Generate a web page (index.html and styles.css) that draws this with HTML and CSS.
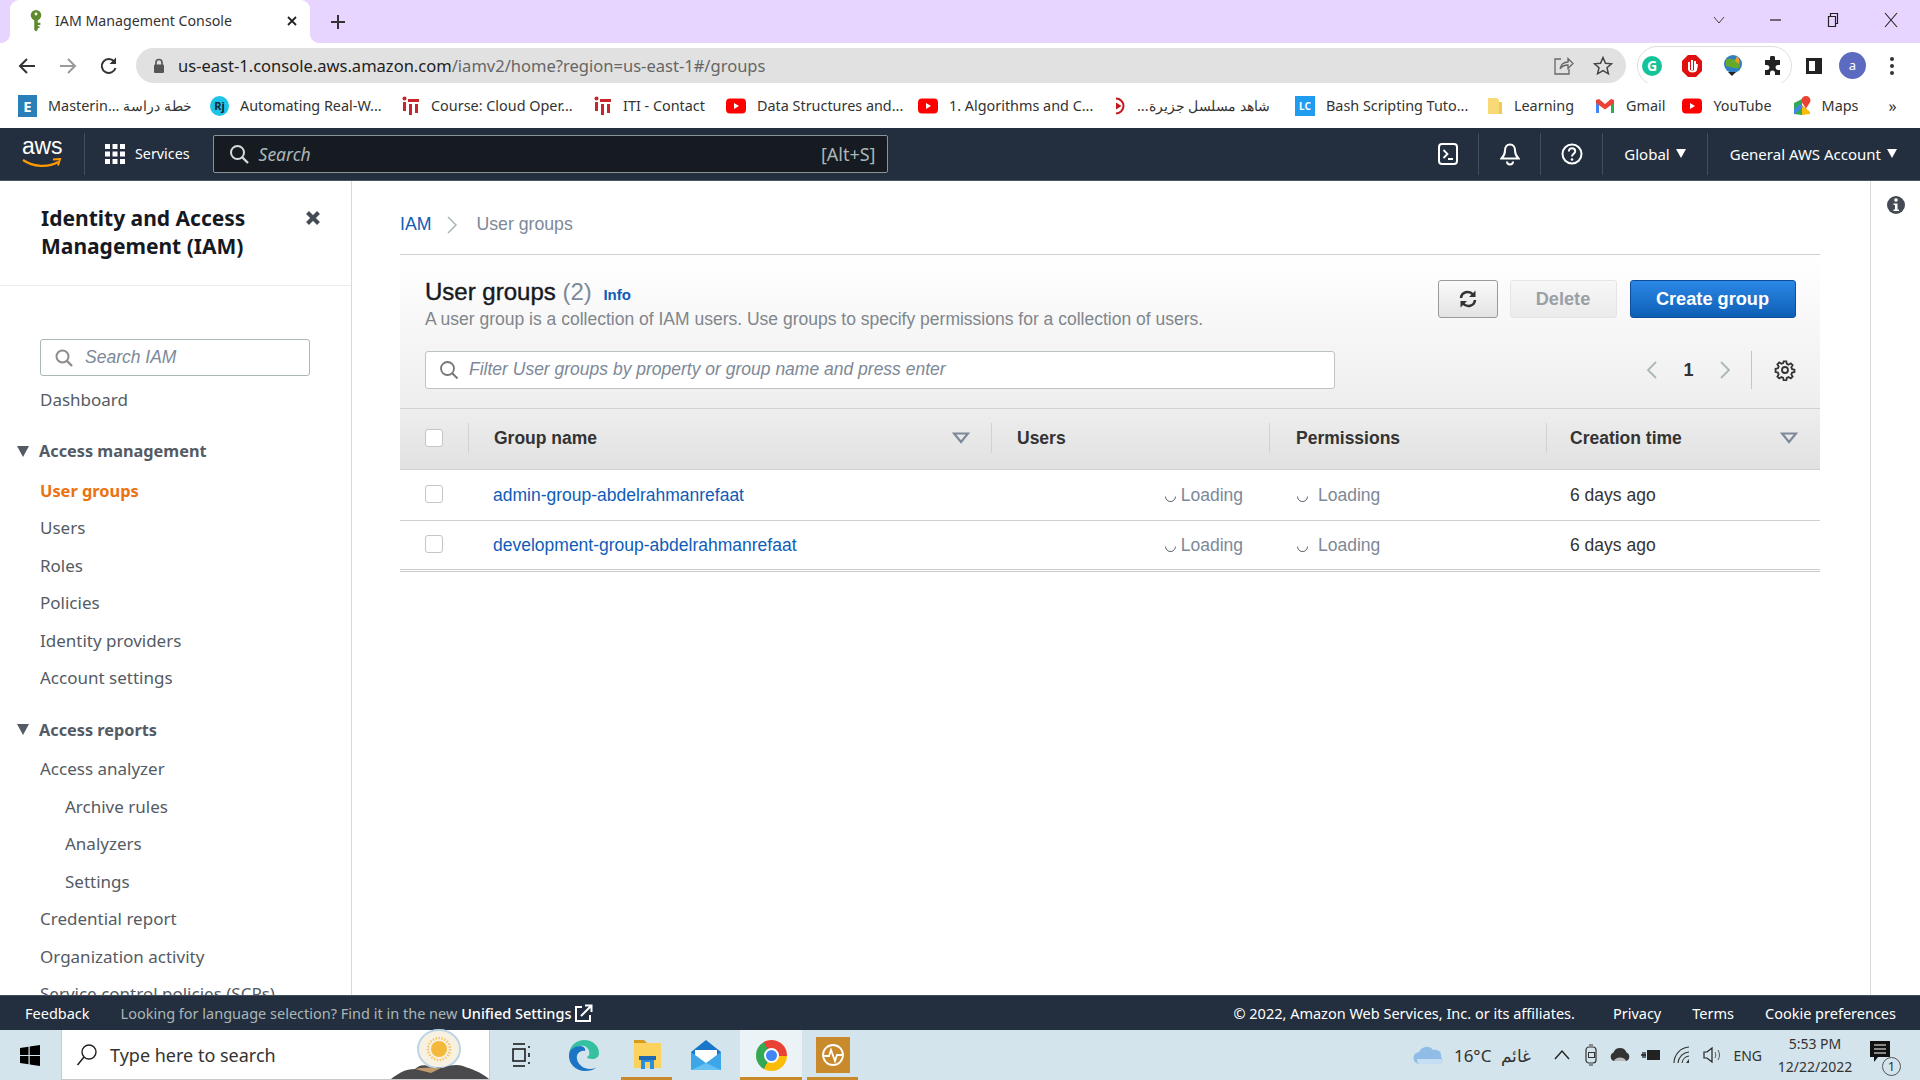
FILE: index.html
```html
<!DOCTYPE html>
<html lang="en">

<head>
  <meta charset="UTF-8">
  <meta name="viewport" content="width=device-width, initial-scale=1.0">
  <title>IAM Management Console</title>
  <link rel="stylesheet" href="styles.css">
</head>

<body>
  <!-- browser window -->
  <div class="tabstrip">
    <div class="tab">
      <svg class="favicon" width="16" height="26" viewBox="0 0 16 26"><circle cx="8" cy="6.5" r="6" fill="#5f8a2c"/><circle cx="8" cy="5" r="1.6" fill="#fff"/><path d="M6 11h4v12l-2 2-2-2zM10 15h3v2.5h-3zM10 19h2v2h-2z" fill="#5f8a2c"/></svg>
      <span class="tab-title">IAM Management Console</span>
      <svg class="tab-close" width="12" height="12" viewBox="0 0 12 12"><path d="M2 2l8 8M10 2l-8 8" stroke="#222" stroke-width="1.8"/></svg>
    </div>
    <svg class="new-tab" width="16" height="16" viewBox="0 0 16 16"><path d="M8 1v14M1 8h14" stroke="#333" stroke-width="2"/></svg>
    <div class="window-btns">
      <svg width="14" height="10" viewBox="0 0 14 10"><path d="M2 2l5 6 5-6" fill="none" stroke="#444"/></svg>
      <svg width="14" height="10" viewBox="0 0 14 10"><path d="M1 5h11" stroke="#222" stroke-width="1.2"/></svg>
      <svg width="14" height="16" viewBox="0 0 14 16"><path d="M2.500 4.500h7v10h-7zM4.500 4V1.500h7v10H10" fill="none" stroke="#222" stroke-width="1.200"/></svg>
      <svg width="16" height="16" viewBox="0 0 16 16"><path d="M2 1l12 14M14 1L2 15" stroke="#222" stroke-width="1.100"/></svg>
    </div>
  </div>

  <div class="toolbar">
    <svg class="tool-btn" width="20" height="20" viewBox="0 0 20 20"><path d="M18 10H3M10 3l-7 7 7 7" fill="none" stroke="#333" stroke-width="2"/></svg>
    <svg class="tool-btn" width="20" height="20" viewBox="0 0 20 20"><path d="M2 10h15M10 3l7 7-7 7" fill="none" stroke="#9a9a9a" stroke-width="2"/></svg>
    <svg class="tool-btn" width="20" height="20" viewBox="0 0 20 20"><path d="M16.500 12a7 7 0 1 1-1.300-6.500" fill="none" stroke="#333" stroke-width="2"/><path d="M17 1.500V8h-6.500z" fill="#333"/></svg>
    <div class="omnibox">
      <svg width="12" height="16" viewBox="0 0 12 16"><path d="M3 7V4.500a3 3 0 0 1 6 0V7" fill="none" stroke="#555" stroke-width="1.600"/><rect x="1" y="6.500" width="10" height="8.500" rx="1.200" fill="#555"/></svg>
      <span class="url"><span class="url-host">us-east-1.console.aws.amazon.com</span>/iamv2/home?region=us-east-1#/groups</span>
      <svg class="omni-share" width="22" height="22" viewBox="0 0 22 22"><path d="M9 4H3v15h14v-5" fill="none" stroke="#666" stroke-width="1.300"/><path d="M8 14c1-5 4-7 8-7V3.500L21 8.500l-5 5V10c-3 0-6 1-8 4z" fill="none" stroke="#666" stroke-width="1.300"/></svg>
      <svg width="20" height="20" viewBox="0 0 20 20"><path d="M10 1.500l2.500 5.700 6.100.6-4.600 4 1.400 6-5.400-3.200-5.400 3.200 1.400-6-4.600-4 6.100-.6z" fill="none" stroke="#444" stroke-width="1.500"/></svg>
    </div>
    <div class="ext-pill">
      <span class="ext-g">G</span>
      <svg width="22" height="24" viewBox="0 0 22 24"><path d="M7 1h8l6 6v10l-6 6H7l-6-6V7z" fill="#e01010"/><path d="M8 16V8M11 16V6M14 16V7M8 16c1 2 6 2 7 0l1-6" fill="none" stroke="#fff" stroke-width="2"/></svg>
      <svg width="22" height="24" viewBox="0 0 22 24"><circle cx="11" cy="10" r="9" fill="#2f7fc4"/><path d="M4 6c4-3 8 1 10-1 3 2 5 6 3 9-4 1-7-1-13-2z" fill="#65a92a"/><path d="M15 2c2 2 3 5 2 8l-4-3z" fill="#f0a020"/><path d="M6 18l4 4 4-4z" fill="#222"/></svg>
      <svg width="20" height="20" viewBox="0 0 20 20"><path d="M7 2a2.500 2.500 0 0 1 5 0v2h5v5h-2a2.500 2.500 0 0 0 0 5h2v5h-5v-2a2.500 2.500 0 0 0-5 0v2H2v-5h2a2.500 2.500 0 0 0 0-5H2V4h5z" fill="#222"/></svg>
    </div>
    <svg class="side-panel" width="18" height="18" viewBox="0 0 18 18"><path d="M1 1h16v16H1z" fill="#222"/><path d="M4 4h6v10H4z" fill="#fff"/></svg>
    <span class="avatar">a</span>
    <svg class="tool-menu" width="6" height="20" viewBox="0 0 6 20"><circle cx="3" cy="3" r="2" fill="#333"/><circle cx="3" cy="10" r="2" fill="#333"/><circle cx="3" cy="17" r="2" fill="#333"/></svg>
  </div>

  <div class="bookmarks">
    <div class="bookmark long">
      <span class="bm-e">E</span>
      <span>Masterin... خطة دراسة</span>
    </div>
    <div class="bookmark long">
      <span class="bm-rj">Rj</span>
      <span>Automating Real-W...</span>
    </div>
    <div class="bookmark long">
      <svg width="18" height="20" viewBox="0 0 18 20"><path d="M1 6h3v9H1zM6 3h11v3H6zM7 8h3v11H7zM13 8h3v9h-3z" fill="#c9252d"/><circle cx="2.500" cy="2.500" r="2" fill="#c9252d"/></svg>
      <span>Course: Cloud Oper...</span>
    </div>
    <div class="bookmark">
      <svg width="18" height="20" viewBox="0 0 18 20"><path d="M1 6h3v9H1zM6 3h11v3H6zM7 8h3v11H7zM13 8h3v9h-3z" fill="#c9252d"/><circle cx="2.500" cy="2.500" r="2" fill="#c9252d"/></svg>
      <span>ITI - Contact</span>
    </div>
    <div class="bookmark long">
      <svg width="20" height="16" viewBox="0 0 20 16"><rect width="20" height="15" y="0.500" rx="4" fill="#f00"/><path d="M8 5l5 3-5 3z" fill="#fff"/></svg>
      <span>Data Structures and...</span>
    </div>
    <div class="bookmark long">
      <svg width="20" height="16" viewBox="0 0 20 16"><rect width="20" height="15" y="0.500" rx="4" fill="#f00"/><path d="M8 5l5 3-5 3z" fill="#fff"/></svg>
      <span>1. Algorithms and C...</span>
    </div>
    <div class="bookmark shahid">
      <svg width="16" height="18" viewBox="0 0 16 18"><path d="M6 1.500a7.500 7.500 0 1 1 0 15" fill="none" stroke="#c4161c" stroke-width="2"/><path d="M6 5.500l5.500 3.500L6 12.500z" fill="#c4161c"/></svg>
      <span dir="rtl">شاهد مسلسل جزيرة...</span>
    </div>
    <div class="bookmark long">
      <span class="bm-lc">LC</span>
      <span>Bash Scripting Tuto...</span>
    </div>
    <div class="bookmark">
      <svg width="16" height="18" viewBox="0 0 16 18"><path d="M1 1h9l2 2v14H1z" fill="#f9d976"/><path d="M12 5h3v12h-3z" fill="#f3c84f"/></svg>
      <span>Learning</span>
    </div>
    <div class="bookmark gmail">
      <svg width="20" height="16" viewBox="0 0 20 16"><path d="M1 2v13h3V6z" fill="#4285f4"/><path d="M19 2v13h-3V6z" fill="#34a853"/><path d="M1 2l3-1 6 5 6-5 3 1v3l-9 6.500L1 5z" fill="#ea4335"/></svg>
      <span>Gmail</span>
    </div>
    <div class="bookmark">
      <svg width="20" height="16" viewBox="0 0 20 16"><rect width="20" height="15" y="0.500" rx="4" fill="#f00"/><path d="M8 5l5 3-5 3z" fill="#fff"/></svg>
      <span>YouTube</span>
    </div>
    <div class="bookmark">
      <svg width="18" height="20" viewBox="0 0 18 20"><path d="M1 7l8-4v16l-8-1z" fill="#34a853"/><path d="M9 9l8 7v2l-8 1z" fill="#fbbc04"/><path d="M1 14l6-6 3 3-9 7z" fill="#4285f4"/><path d="M13 0a4.500 4.500 0 0 1 4.500 4.500C17.500 7 14 10 13 13c-1-3-4.500-6-4.500-8.500A4.500 4.500 0 0 1 13 0z" fill="#ea4335"/></svg>
      <span>Maps</span>
    </div>
    <span class="bm-more">»</span>
  </div>

  <!-- console header -->
  <header class="aws-nav">
    <div class="aws-logo">
      <span>aws</span>
      <svg width="40" height="11" viewBox="0 0 40 11"><path d="M1 2c10 7 25 8 35 2" fill="none" stroke="#f90" stroke-width="2.200"/><path d="M31 1.500l7-.5-2 6.500" fill="none" stroke="#f90" stroke-width="2"/></svg>
    </div>
    <div class="services">
      <svg width="20" height="20" viewBox="0 0 20 20" fill="#fff"><rect width="5" height="5"/><rect x="7.500" width="5" height="5"/><rect x="15" width="5" height="5"/><rect y="7.500" width="5" height="5"/><rect x="7.500" y="7.500" width="5" height="5"/><rect x="15" y="7.500" width="5" height="5"/><rect y="15" width="5" height="5"/><rect x="7.500" y="15" width="5" height="5"/><rect x="15" y="15" width="5" height="5"/></svg>
      <span>Services</span>
    </div>
    <div class="nav-search">
      <svg width="20" height="20" viewBox="0 0 20 20"><circle cx="8.500" cy="8.500" r="6.500" fill="none" stroke="#d5dbdb" stroke-width="2"/><path d="M13 13l6 6" stroke="#d5dbdb" stroke-width="2.400"/></svg>
      <span class="nav-search-text">Search</span>
      <span class="nav-search-key">[Alt+S]</span>
    </div>
    <div class="nav-right">
      <span class="nav-icon">
        <svg width="20" height="24" viewBox="0 0 20 24"><rect x="1" y="2" width="18" height="20" rx="3" fill="none" stroke="#fff" stroke-width="2"/><path d="M5.500 8l4 4-4 4M10 17h5" fill="none" stroke="#fff" stroke-width="1.800"/></svg>
      </span>
      <span class="nav-icon">
        <svg width="20" height="24" viewBox="0 0 20 24"><path d="M10 2.500c3.500 0 5 3 5 6 0 4 1 5.500 3.500 8h-17c2.500-2.500 3.500-4 3.500-8 0-3 1.500-6 5-6z" fill="none" stroke="#fff" stroke-width="2"/><path d="M7 19.500a3 3 0 0 0 6 0" fill="none" stroke="#fff" stroke-width="2"/></svg>
      </span>
      <span class="nav-icon">
        <svg width="22" height="24" viewBox="0 0 22 24"><circle cx="11" cy="12" r="9.500" fill="none" stroke="#fff" stroke-width="2"/><path d="M7.800 9.500c0-4.500 6.400-4 6.400-.3 0 2.500-3.200 2.500-3.200 5.300" fill="none" stroke="#fff" stroke-width="2"/><circle cx="11" cy="17.500" r="1.300" fill="#fff"/></svg>
      </span>
      <span class="nav-menu global">Global<i class="caret"></i></span>
      <span class="nav-menu account">General AWS Account<i class="caret"></i></span>
    </div>
  </header>

  <div class="console">
    <aside class="sidebar">
      <div class="sidebar-head">
        <h2>Identity and Access Management (IAM)</h2>
        <svg class="sidebar-close" width="16" height="16" viewBox="0 0 16 16"><path d="M2.500 2.500l11 11M13.500 2.500l-11 11" stroke="#444b54" stroke-width="4"/></svg>
      </div>
      <div class="side-search">
        <svg width="18" height="18" viewBox="0 0 18 18"><circle cx="7.500" cy="7.500" r="6" fill="none" stroke="#8c8c8c" stroke-width="2"/><path d="M12 12l5 5" stroke="#8c8c8c" stroke-width="2.400"/></svg>
        <span>Search IAM</span>
      </div>
      <nav class="side-nav">
        <a class="nav-item">Dashboard</a>
        <div class="nav-group">
          <div class="nav-group-title"><i class="group-arrow"></i>Access management</div>
          <a class="nav-item active">User groups</a>
          <a class="nav-item">Users</a>
          <a class="nav-item">Roles</a>
          <a class="nav-item">Policies</a>
          <a class="nav-item">Identity providers</a>
          <a class="nav-item">Account settings</a>
        </div>
        <div class="nav-group">
          <div class="nav-group-title"><i class="group-arrow"></i>Access reports</div>
          <a class="nav-item">Access analyzer</a>
          <a class="nav-item sub">Archive rules</a>
          <a class="nav-item sub">Analyzers</a>
          <a class="nav-item sub">Settings</a>
          <a class="nav-item">Credential report</a>
          <a class="nav-item">Organization activity</a>
          <a class="nav-item">Service control policies (SCPs)</a>
        </div>
      </nav>
    </aside>

    <main class="main">
      <div class="breadcrumb">
        <a>IAM</a>
        <svg width="12" height="20" viewBox="0 0 12 20"><path d="M2 2l8 8-8 8" fill="none" stroke="#aab7b8" stroke-width="1.500"/></svg>
        <span>User groups</span>
      </div>

      <section class="panel">
        <div class="panel-head">
          <div class="panel-top">
            <div>
              <h1 class="panel-title"><span class="title-text">User groups</span> <span class="count">(2)</span> <a class="info">Info</a></h1>
              <p class="panel-desc">A user group is a collection of IAM users. Use groups to specify permissions for a collection of users.</p>
            </div>
            <div class="panel-actions">
              <button class="btn btn-icon">
                <svg width="20" height="20" viewBox="0 0 20 20"><path d="M3 9c.5-6 8-8 12-3.500M17 11c-.5 6-8 8-12 3.500" fill="none" stroke="#333" stroke-width="2.600"/><path d="M17.500 1.500v6.500H11zM2.500 18.500V12H9z" fill="#333"/></svg>
              </button>
              <button class="btn btn-disabled">Delete</button>
              <button class="btn btn-primary">Create group</button>
            </div>
          </div>
          <div class="panel-filter">
            <div class="filter-box">
              <svg width="20" height="20" viewBox="0 0 20 20"><circle cx="8.500" cy="8.500" r="6.500" fill="none" stroke="#777" stroke-width="1.800"/><path d="M13 13l5.500 5.500" stroke="#777" stroke-width="2"/></svg>
              <span>Filter User groups by property or group name and press enter</span>
            </div>
            <div class="pager">
              <svg width="12" height="20" viewBox="0 0 12 20"><path d="M10 2l-8 8 8 8" fill="none" stroke="#aab7b8" stroke-width="1.800"/></svg>
              <span class="page-num">1</span>
              <svg width="12" height="20" viewBox="0 0 12 20"><path d="M2 2l8 8-8 8" fill="none" stroke="#aab7b8" stroke-width="1.800"/></svg>
            </div>
            <div class="pager-settings">
              <svg width="22" height="22" viewBox="0 0 22 22"><circle cx="11" cy="11" r="3" fill="none" stroke="#333" stroke-width="1.800"/><path d="M9.500 1.500h3l.5 2.700 2 .9 2.400-1.500 2.100 2.100-1.500 2.400.9 2 2.600.6v2.600l-2.600.6-.9 2 1.500 2.400-2.100 2.100-2.400-1.500-2 .9-.5 2.700h-3l-.5-2.700-2-.9-2.400 1.500-2.100-2.100 1.500-2.400-.9-2-2.600-.6V9.700l2.600-.6.9-2-1.500-2.400 2.100-2.100 2.400 1.500 2-.9z" transform="translate(1.100 1.100) scale(.9)" fill="none" stroke="#333" stroke-width="2"/></svg>
            </div>
          </div>
        </div>

        <div class="table-row table-header">
          <div class="cell cell-check"><i class="checkbox"></i></div>
          <div class="cell cell-th">Group name<svg class="sort" width="18" height="12" viewBox="0 0 18 12"><path d="M2 1.500h14L9 10z" fill="none" stroke="#7d8998" stroke-width="2.200"/></svg></div>
          <div class="cell cell-th">Users</div>
          <div class="cell cell-th">Permissions</div>
          <div class="cell cell-th">Creation time<svg class="sort" width="18" height="12" viewBox="0 0 18 12"><path d="M2 1.500h14L9 10z" fill="none" stroke="#7d8998" stroke-width="2.200"/></svg></div>
        </div>
        <div class="table-row">
          <div class="cell cell-check"><i class="checkbox"></i></div>
          <div class="cell cell-name"><a>admin-group-abdelrahmanrefaat</a></div>
          <div class="cell cell-users"><i class="spinner"></i>Loading</div>
          <div class="cell cell-perms"><i class="spinner"></i>Loading</div>
          <div class="cell cell-time">6 days ago</div>
        </div>
        <div class="table-row last">
          <div class="cell cell-check"><i class="checkbox"></i></div>
          <div class="cell cell-name"><a>development-group-abdelrahmanrefaat</a></div>
          <div class="cell cell-users"><i class="spinner"></i>Loading</div>
          <div class="cell cell-perms"><i class="spinner"></i>Loading</div>
          <div class="cell cell-time">6 days ago</div>
        </div>
      </section>
    </main>

    <aside class="rail">
      <svg width="18" height="20" viewBox="0 0 18 20"><circle cx="9" cy="10" r="9" fill="#444b54"/><circle cx="9" cy="5" r="1.800" fill="#fff"/><path d="M6.500 8.500h4v6h1.500V16H6.500v-1.500H8V10H6.500z" fill="#fff"/></svg>
    </aside>
  </div>

  <footer class="aws-footer">
    <a class="feedback">Feedback</a>
    <span class="lang-note">Looking for language selection? Find it in the new <b>Unified Settings</b></span>
    <svg width="19" height="19" viewBox="0 0 19 19"><path d="M8 3H2v14h14v-6" fill="none" stroke="#fff" stroke-width="2"/><path d="M7 12L17 2M11 1.500h6.500V8" fill="none" stroke="#fff" stroke-width="2"/></svg>
    <div class="footer-right">
      <span class="copyright">© 2022, Amazon Web Services, Inc. or its affiliates.</span>
      <a>Privacy</a>
      <a>Terms</a>
      <a>Cookie preferences</a>
    </div>
  </footer>

  <!-- windows taskbar -->
  <div class="taskbar">
    <svg class="win-logo" width="20" height="21" viewBox="0 0 20 21"><path d="M0 3l8.500-1.300v8.200H0zM9.700 1.500L20 0v9.900H9.700zM0 11.100h8.500v8.200L0 18zM9.700 11.100H20V21L9.700 19.500z" fill="#000"/></svg>
    <div class="win-search">
      <svg width="22" height="24" viewBox="0 0 22 24"><circle cx="13" cy="9" r="7" fill="none" stroke="#222" stroke-width="1.400"/><path d="M8 14l-6.500 8" stroke="#222" stroke-width="1.600"/></svg>
      <span>Type here to search</span>
      <svg class="search-art" width="100" height="50" viewBox="0 0 100 50"><ellipse cx="50" cy="20" rx="21" ry="19" fill="#f8f1e2" stroke="#bcd5e6" stroke-width="2"/><circle cx="50" cy="20" r="8" fill="#f4b93a"/><circle cx="50" cy="20" r="11" fill="none" stroke="#f4c766" stroke-width="2.500" stroke-dasharray="1.500 1.500"/><path d="M2 50c8-6 14-10 24-10 4-4 10-5 14-2 6 2 10 0 14 1 6-3 14-4 20-2 8 3 18 6 26 13z" fill="#4a4a4c"/><path d="M26 40c6-2 18-1 26-1l-10 5z" fill="#c09a6c"/></svg>
    </div>
    <div class="task-icons">
      <span class="task-slot">
        <svg width="20" height="26" viewBox="0 0 20 26"><path d="M2 2h12M2 24h12M2 7h12v12H2zM18 4v2M18 11v4M18 20v2" fill="none" stroke="#111" stroke-width="1.500"/></svg>
      </span>
      <span class="task-slot">
        <svg width="32" height="32" viewBox="0 0 32 32"><path d="M1 15C2 6 9 1 16 1c9 0 15 6 15 13 0 4-3 6-7 6-3 0-5-1-5-2 2-1 3-3 2-6-1-4-5-6-9-5-6 1-10 5-11 8z" fill="#35c1a0"/><path d="M1 15c1-5 6-8 11-8 4 0 6 3 5 5-5-1-9 3-8 8 1 6 7 10 13 10 3 0 6-1 7-2-3 3-8 4-12 4C8 32 0 25 1 15z" fill="#1c75c4"/></svg>
      </span>
      <span class="task-slot underlined">
        <svg width="28" height="32" viewBox="0 0 28 32"><path d="M1 1h10l3 3H1z" fill="#d79b1f"/><rect x="1" y="4" width="27" height="25" fill="#fbd35c"/><path d="M8 30V17h13v13h-4v-7h-5v7z" fill="#2b8fdd"/><path d="M6 17h17v4H6z" fill="#2168b0"/></svg>
      </span>
      <span class="task-slot">
        <svg width="32" height="32" viewBox="0 0 32 32"><path d="M16 1L1 13v18h30V13z" fill="#1976c9"/><path d="M5 11h22v9l-11 7-11-7z" fill="#fff"/><path d="M1 13l15 11 15-11v18H1z" fill="#3da6e8"/><path d="M16 24L1 31h30z" fill="#65c1f2"/></svg>
      </span>
      <span class="task-slot active underlined"><i class="chrome-logo"></i></span>
      <span class="task-slot underlined">
        <svg width="34" height="36" viewBox="0 0 34 36"><rect width="34" height="36" fill="#c98a2c"/><circle cx="17" cy="18" r="10" fill="none" stroke="#fff" stroke-width="1.800"/><path d="M7 19h6l2-6 4 11 2-6h6" fill="none" stroke="#fff" stroke-width="1.800"/></svg>
      </span>
    </div>
    <div class="tray">
      <svg class="tray-cloud" width="32" height="20" viewBox="0 0 32 20"><path d="M7 19a6 6 0 0 1-1-12c2-5 10-8 14-2 5-1 9 2 8 7 3 3 1 7-3 7z" fill="#8fbde8"/><path d="M4 14h26c-1 3-2 5-5 5H7c-2 0-3-2-3-5z" fill="#c6def3"/></svg>
      <span class="temp">16°C</span>
      <span class="weather">غائم</span>
      <svg class="tray-up" width="18" height="12" viewBox="0 0 18 12"><path d="M2 10l7-8 7 8" fill="none" stroke="#222" stroke-width="1.400"/></svg>
      <div class="tray-icons">
        <svg width="14" height="22" viewBox="0 0 14 22"><rect x="1" y="3" width="10" height="16" rx="3" fill="none" stroke="#333" stroke-width="1.200"/><rect x="3.500" y="8.500" width="6" height="5" fill="none" stroke="#333"/><path d="M4 1h4M4 21h4" stroke="#333"/></svg>
        <svg width="20" height="18" viewBox="0 0 20 18"><path d="M4 15a4.500 4.500 0 0 1-.5-8.500 7 7 0 0 1 13 0A4.500 4.500 0 0 1 16 15z" fill="#333"/><path d="M4 15c1-4 10-5 12 0z" fill="#bbb"/></svg>
        <svg width="20" height="14" viewBox="0 0 20 14"><rect x="6" y="2" width="13" height="10" fill="#222"/><path d="M0 7h5M2 4v6M4 4v6" stroke="#222" stroke-width="1.300"/></svg>
        <svg width="20" height="20" viewBox="0 0 20 20"><path d="M2 18a16 16 0 0 1 15-16M6 18A12 12 0 0 1 17 7M10 18a8 8 0 0 1 7-7" fill="none" stroke="#333" stroke-width="1.100"/><path d="M14 18l3-4v4z" fill="#333"/></svg>
        <svg width="22" height="20" viewBox="0 0 22 20"><path d="M1 7h3l5-4v14l-5-4H1z" fill="none" stroke="#222" stroke-width="1.200"/><path d="M12 7c1 2 1 4 0 6M15 5c2 3 2 7 0 10" fill="none" stroke="#555"/></svg>
      </div>
      <span class="lang">ENG</span>
      <div class="clock">
        <span>5:53 PM</span>
        <span>12/22/2022</span>
      </div>
      <div class="notif">
        <svg width="20" height="22" viewBox="0 0 20 22"><path d="M0 0h20v16H8l-4 5v-5H0z" fill="#111"/><path d="M4 4h12M4 8h12M4 12h12" stroke="#fff" stroke-width="1.200"/></svg>
        <span class="notif-badge">1</span>
      </div>
    </div>
  </div>
</body>

</html>
```

FILE: styles.css
```css
* {
  margin: 0;
  padding: 0;
  box-sizing: border-box;
}

:root {
  --squid: #232f3e;
  --link: #0f5cb8;
  --orange: #ec7211;
  --grey-text: #7f868c;
  --line: #cfd2d4;
  --ui-font: "Noto Sans", sans-serif;
  --body-font: "Liberation Sans", Arial, sans-serif;
}

body {
  width: 1920px;
  height: 1080px;
  overflow: hidden;
  display: flex;
  flex-direction: column;
  background: #fff;
  font-family: var(--ui-font);
}

svg {
  display: block;
  flex: none;
}

/* browser tabs */
.tabstrip {
  height: 43px;
  display: flex;
  align-items: center;
  background: #e8d5ff;
  padding-left: 10px;
}

.tab {
  position: relative;
  width: 300px;
  height: 43px;
  display: flex;
  align-items: center;
  background: #fff;
  border-radius: 9px 9px 0 0;
  padding: 0 12px 2px 19px;
}

.tab::before,
.tab::after {
  content: "";
  position: absolute;
  bottom: 0;
  width: 10px;
  height: 10px;
}

.tab::before {
  left: -10px;
  background: radial-gradient(circle at 0 0, #e8d5ff 10px, #fff 10.500px);
}

.tab::after {
  right: -10px;
  background: radial-gradient(circle at 100% 0, #e8d5ff 10px, #fff 10.500px);
}

.favicon {
  width: 14px;
  margin-right: 12px;
}

.tab-title {
  flex: 1;
  font-size: 14.200px;
  color: #333;
  white-space: nowrap;
}

.new-tab {
  margin-left: 20px;
}

.window-btns {
  margin-left: auto;
  display: flex;
  align-items: center;
  gap: 43px;
  padding: 0 21px 4px 0;
}

/* browser toolbar */
.toolbar {
  height: 40px;
  display: flex;
  align-items: center;
  padding: 5px 0 0 17px;
  background: #fff;
}

.tool-btn {
  margin-right: 21px;
}

.omnibox {
  width: 1490px;
  height: 35px;
  margin-left: -4px;
  display: flex;
  align-items: center;
  background: #e1e1e1;
  border-radius: 18px;
  padding: 0 13px 0 17px;
}

.url {
  flex: 1;
  margin-left: 13px;
  font-size: 16.550px;
  color: #666;
  white-space: nowrap;
}

.url-host {
  color: #222;
}

.omni-share {
  margin-right: 19px;
}

.ext-pill {
  width: 155px;
  height: 40px;
  margin-left: 11px;
  display: flex;
  align-items: center;
  justify-content: space-between;
  border: 1px solid #dedede;
  border-radius: 20px;
  padding: 0 8px 0 4px;
}

.ext-g {
  width: 20px;
  height: 20px;
  border-radius: 50%;
  background: #15c39a;
  color: #fff;
  font-size: 14px;
  font-weight: 700;
  line-height: 20px;
  text-align: center;
}

.side-panel {
  margin-left: 13px;
}

.avatar {
  width: 27px;
  height: 27px;
  margin-left: 16px;
  border-radius: 50%;
  background: #5c6bc0;
  color: #fff;
  font-size: 13px;
  line-height: 26px;
  text-align: center;
}

.tool-menu {
  margin-left: 23px;
}

/* bookmarks */
.bookmarks {
  height: 45px;
  display: flex;
  align-items: center;
  padding-left: 18px;
  background: #fff;
  font-size: 14.400px;
  color: #333;
}

.bookmark {
  display: flex;
  align-items: center;
  gap: 11px;
  padding-right: 21px;
  white-space: nowrap;
}

.bookmark.long {
  width: 192px;
  padding-right: 0;
}

.bookmark.shahid {
  width: 185px;
  padding-right: 0;
}

.bookmark.gmail {
  padding-right: 17px;
}

.bm-e {
  width: 19px;
  height: 22px;
  background: #2a7fb8;
  color: #fff;
  font-size: 15px;
  font-weight: 700;
  line-height: 22px;
  text-align: center;
}

.bm-rj {
  width: 19px;
  height: 20px;
  border-radius: 50%;
  background: #1cc4e8;
  color: #123;
  font-size: 11px;
  font-weight: 700;
  line-height: 19px;
  text-align: center;
}

.bm-lc {
  width: 20px;
  height: 20px;
  background: #1f9cf0;
  color: #fff;
  font-size: 10px;
  font-weight: 700;
  line-height: 20px;
  text-align: center;
}

.bm-more {
  margin-left: 9px;
  font-size: 16px;
}

/* aws console header */
.aws-nav {
  height: 53px;
  display: flex;
  align-items: center;
  background: var(--squid);
  border-bottom: 1px solid #4a5563;
  padding-bottom: 1px;
  color: #fff;
}

.aws-logo {
  width: 85px;
  height: 42px;
  padding: 3px 0 0 22px;
  border-right: 1px solid #414d5c;
  line-height: 1;
}

.aws-logo span {
  display: block;
  height: 22px;
  font-family: var(--body-font);
  font-size: 23px;
  line-height: 20px;
  letter-spacing: -.2px;
}

.services {
  display: flex;
  align-items: center;
  gap: 10px;
  margin-left: 20px;
  font-size: 14.300px;
}

.nav-search {
  width: 675px;
  height: 38px;
  margin-left: 23px;
  display: flex;
  align-items: center;
  background: #161b22;
  border: 1px solid #879596;
  border-radius: 2px;
  padding: 0 11px 0 15px;
  color: #aab7b8;
}

.nav-search-text {
  flex: 1;
  margin-left: 10px;
  font-size: 17.500px;
  font-style: italic;
}

.nav-search-key {
  font-size: 18px;
}

.nav-right {
  margin-left: auto;
  display: flex;
  align-items: center;
  height: 42px;
  font-size: 15px;
}

.nav-icon {
  width: 62px;
  height: 42px;
  display: flex;
  align-items: center;
  justify-content: center;
  border-right: 1px solid #414d5c;
}

.nav-menu {
  height: 42px;
  display: flex;
  align-items: center;
  gap: 6px;
  white-space: nowrap;
}

.global {
  padding: 0 21px;
  border-right: 1px solid #414d5c;
}

.account {
  padding: 0 23px 0 22px;
}

.caret {
  width: 0;
  height: 0;
  border-left: 5.500px solid transparent;
  border-right: 5.500px solid transparent;
  border-top: 9px solid #fff;
}

/* page body */
.console {
  flex: 1;
  min-height: 0;
  display: flex;
  overflow: hidden;
}

.sidebar {
  width: 352px;
  flex: none;
  border-right: 1px solid #d5dbdb;
}

.sidebar-head {
  height: 105px;
  display: flex;
  align-items: flex-start;
  justify-content: space-between;
  padding: 23px 30px 0 41px;
  border-bottom: 1px solid #eaeded;
}

.sidebar-head h2 {
  width: 230px;
  font-size: 21px;
  line-height: 28px;
  font-weight: 700;
  color: #16191f;
}

.sidebar-close {
  margin-top: 6px;
}

.side-search {
  width: 270px;
  height: 37px;
  margin: 53px 0 0 40px;
  display: flex;
  align-items: center;
  gap: 12px;
  padding-left: 14px;
  border: 1px solid #aab7b8;
  border-radius: 3px;
  font-family: var(--body-font);
  font-size: 17.500px;
  font-style: italic;
  color: #7d8998;
}

.side-nav {
  margin-top: 4.500px;
}

.nav-item {
  display: block;
  height: 37.500px;
  padding-left: 40px;
  font-size: 17px;
  line-height: 37.500px;
  color: #545b64;
  white-space: nowrap;
}

.nav-item.sub {
  padding-left: 65px;
}

.nav-item.active {
  color: var(--orange);
  font-size: 16.400px;
  font-weight: 700;
}

.nav-group {
  margin-top: 14.500px;
}

.nav-group-title {
  height: 37.500px;
  margin-bottom: 1.500px;
  display: flex;
  align-items: center;
  gap: 10px;
  padding-left: 17px;
  font-size: 16.300px;
  font-weight: 700;
  color: #545b64;
}

.group-arrow {
  width: 0;
  height: 0;
  border-left: 6.500px solid transparent;
  border-right: 6.500px solid transparent;
  border-top: 11px solid #545b64;
}

.main {
  flex: 1;
  min-width: 0;
  padding: 0 50px 0 48px;
  font-family: var(--body-font);
}

.breadcrumb {
  height: 74px;
  display: flex;
  align-items: center;
  gap: 15px;
  padding-top: 14px;
  border-bottom: 1px solid var(--line);
  font-size: 17.700px;
  color: var(--grey-text);
}

.breadcrumb a {
  color: var(--link);
}

.breadcrumb span {
  margin-left: 3px;
  color: #7d8998;
}

.panel-head {
  height: 154px;
  padding: 25px 24.500px 0 25px;
  background: linear-gradient(#fff, #eeeeee);
  border-bottom: 1px solid var(--line);
}

.panel-top {
  height: 71px;
  display: flex;
  align-items: flex-start;
  justify-content: space-between;
}

.panel-title {
  height: 26px;
  margin-top: -1px;
  font-size: 24px;
  line-height: 26px;
  font-weight: 400;
  color: #16191f;
  white-space: nowrap;
}

.title-text {
  -webkit-text-stroke: .4px #16191f;
}

.count {
  color: #7d8998;
}

.info {
  margin-left: 5px;
  font-size: 15px;
  font-weight: 700;
  color: var(--link);
}

.panel-desc {
  margin-top: 3px;
  font-size: 17.500px;
  line-height: 22px;
  color: var(--grey-text);
  white-space: nowrap;
}

.panel-actions {
  display: flex;
  gap: 12px;
}

.btn {
  height: 38px;
  border-radius: 3px;
  font-family: var(--body-font);
  font-size: 18.200px;
  font-weight: 700;
}

.btn-icon {
  width: 60px;
  display: flex;
  align-items: center;
  justify-content: center;
  border: 1px solid #9a9a9a;
  background: linear-gradient(#fafafa, #e3e3e3);
}

.btn-disabled {
  width: 107px;
  border: 1px solid #e5e5e5;
  background: linear-gradient(#f7f7f7, #ebebeb);
  color: #99a0a6;
}

.btn-primary {
  width: 166px;
  margin-left: 1px;
  border: 1px solid #0b4f9c;
  background: linear-gradient(#2c87e6, #0e5fb5);
  color: #fff;
}

.panel-filter {
  display: flex;
  align-items: center;
}

.filter-box {
  width: 910px;
  height: 38px;
  display: flex;
  align-items: center;
  gap: 10px;
  padding: 0 0 1px 13px;
  background: #fff;
  border: 1px solid #bcc3c6;
  border-radius: 3px;
  font-size: 17.500px;
  font-style: italic;
  color: #7d8998;
  white-space: nowrap;
}

.pager {
  width: 86px;
  margin-left: auto;
  margin-right: 19px;
  display: flex;
  align-items: center;
  justify-content: space-between;
  font-size: 18px;
  font-weight: 700;
  color: #333;
}

.pager-settings {
  width: 45px;
  height: 38px;
  display: flex;
  align-items: center;
  justify-content: flex-end;
  border-left: 1px solid #c3c6c8;
}

.table-row {
  display: grid;
  grid-template-columns: 68px 523px 278px 277px 274px;
  height: 51px;
  align-items: center;
  border-bottom: 1px solid var(--line);
  font-size: 17.500px;
  color: #333;
}

.table-row.last {
  height: 51px;
  border-bottom: 3px double #c9cccf;
}

.table-header {
  height: 61px;
  padding-bottom: 2px;
  background: linear-gradient(#eeeeee, #e1e1e1);
  font-weight: 700;
  color: #333;
}

.cell {
  height: 30px;
  display: flex;
  align-items: center;
}

.cell-check {
  padding-left: 25px;
}

.table-row:not(.table-header) .cell-check {
  padding-bottom: 2px;
}

.checkbox {
  width: 18px;
  height: 18px;
  background: #fff;
  border: 1px solid #c1c7c8;
  border-radius: 3px;
}

.cell-th {
  position: relative;
  padding-left: 25px;
  border-left: 1px solid #d0d3d5;
}

.cell-th:nth-child(4) {
  padding-left: 26px;
}

.cell-th:last-child {
  padding-left: 23px;
}

.sort {
  position: absolute;
  right: 21px;
  top: 9px;
}

.table-header .cell:last-child .sort {
  right: 22px;
}

.cell-name {
  padding-left: 25px;
}

.cell-name a {
  color: var(--link);
}

.cell-users,
.cell-perms {
  gap: 5px;
  color: #7d8998;
}

.cell-users {
  justify-content: flex-end;
  padding-right: 26px;
}

.cell-perms {
  padding-left: 28px;
}

.cell-perms .spinner {
  margin-right: 5px;
}

.cell-time {
  padding-left: 24px;
}

.spinner {
  width: 11px;
  height: 11px;
  margin-top: 3px;
  border: 1.500px solid transparent;
  border-bottom-color: #687078;
  border-left-color: #687078;
  border-radius: 50%;
  transform: rotate(-45deg);
}

.rail {
  width: 50px;
  flex: none;
  display: flex;
  justify-content: center;
  padding-top: 14px;
  border-left: 1px solid #d5dbdb;
}

/* console footer */
.aws-footer {
  height: 35px;
  display: flex;
  align-items: center;
  gap: 3px;
  padding: 0 24px 0 25px;
  background: var(--squid);
  border-top: 1px solid #414d5c;
  font-size: 14.500px;
  color: #fff;
  white-space: nowrap;
}

.feedback {
  margin-right: 28px;
}

.lang-note {
  color: #aab7b8;
}

.lang-note b {
  font-weight: 500;
  color: #fff;
}

.footer-right {
  margin-left: auto;
  display: flex;
  gap: 31px;
}

.copyright {
  margin-right: 7px;
}

/* windows taskbar */
.taskbar {
  height: 50px;
  display: flex;
  align-items: center;
  background: #d4e4ec;
  padding-left: 20px;
}

.win-search {
  width: 429px;
  height: 50px;
  margin-left: 21px;
  display: flex;
  align-items: center;
  padding-left: 14px;
  background: #fff;
  border: 1px solid #c9c9c9;
  border-top: 0;
  font-size: 18px;
  color: #333;
}

.win-search span {
  flex: 1;
  margin-left: 12px;
}

.search-art {
  align-self: flex-end;
}

.task-icons {
  display: flex;
  height: 50px;
}

.task-slot {
  width: 62px;
  height: 50px;
  display: flex;
  align-items: center;
  justify-content: center;
}

.task-slot:nth-child(2) {
  width: 64px;
  margin-right: 5px;
}

.task-slot:nth-child(3) {
  width: 51px;
}

.task-slot:nth-child(4) {
  width: 68px;
}

.task-slot:nth-child(6) {
  width: 51px;
  margin-left: 5px;
}

.task-slot.active {
  background: #ebf3f7;
}

.task-slot.underlined {
  border-bottom: 3px solid #c98a2c;
  padding-top: 3px;
}

.chrome-logo {
  position: relative;
  width: 31px;
  height: 31px;
  border-radius: 50%;
  background: conic-gradient(from -30deg, #ea4335 0 120deg, #fbbc04 120deg 240deg, #34a853 240deg 360deg);
}

.chrome-logo::after {
  content: "";
  position: absolute;
  inset: 8px;
  border-radius: 50%;
  background: #4285f4;
  border: 2.500px solid #fff;
}

.tray {
  margin-left: auto;
  display: flex;
  align-items: center;
  font-size: 16px;
  color: #333;
  white-space: nowrap;
}

.temp {
  margin-left: 9px;
  font-size: 17px;
}

.weather {
  margin-left: 10px;
  font-size: 17px;
}

.tray-up {
  margin-left: 22px;
}

.tray-icons {
  margin-left: 14px;
  display: flex;
  align-items: center;
  gap: 11px;
}

.lang {
  margin-left: 8px;
  font-size: 14px;
}

.clock {
  width: 92px;
  margin-left: 7px;
  display: flex;
  flex-direction: column;
  align-items: center;
  gap: 2px;
  font-size: 14px;
  line-height: 21px;
}

.notif {
  position: relative;
  width: 59px;
  height: 50px;
  display: flex;
  align-items: center;
  padding: 0 0 6px 9px;
}

.notif-badge {
  position: absolute;
  right: 19px;
  bottom: 4px;
  width: 19px;
  height: 19px;
  border: 1px solid #555;
  border-radius: 50%;
  background: #d4e4ec;
  font-size: 13px;
  line-height: 17px;
  text-align: center;
}
```
